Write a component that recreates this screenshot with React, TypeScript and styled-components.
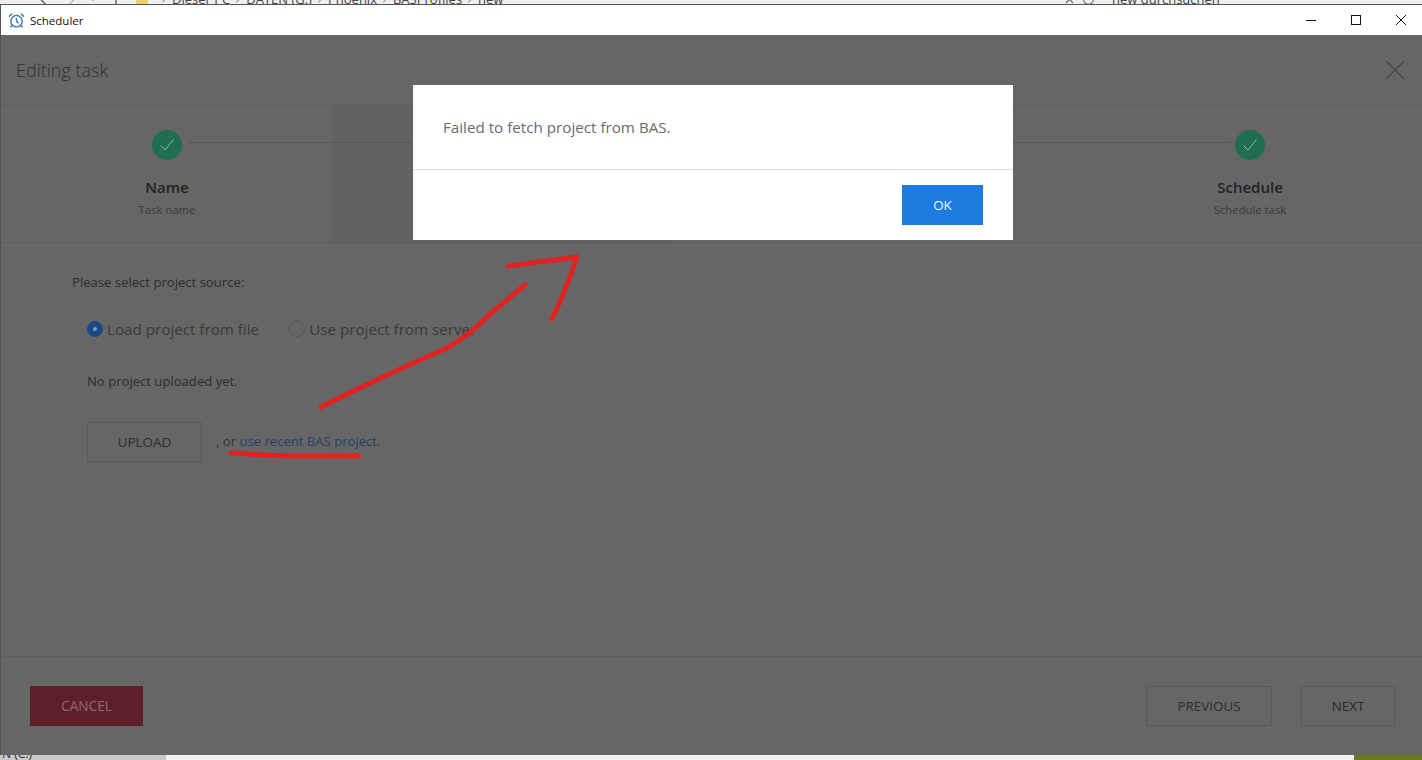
import React from 'react';
import styled, { createGlobalStyle } from 'styled-components';
import { AlarmClock, ArrowLeft, ArrowRight, ArrowUp, ChevronDown, ChevronRight, RotateCw, X } from 'lucide-react';

const GlobalStyle = createGlobalStyle`
    html, body {
        margin: 0;
        padding: 0;
        background: #666666;
    }
    * {
        box-sizing: border-box;
    }
`;

const crumbs = ['Dieser PC', 'DATEN (G:)', 'Phoenix', 'BASProfiles', 'new'];

const steps = [
    { title: 'Name', subtitle: 'Task name', done: true },
    { title: '', subtitle: '', active: true },
    { title: '', subtitle: '' },
    { title: 'Schedule', subtitle: 'Schedule task', done: true },
];

function Check() {
    return (
        <svg width="16" height="14" viewBox="0 0 16 14" fill="none">
            <path d="M1.5 7.5 L6 12 L14.5 1.5" stroke="#8fb8a6" strokeWidth="1" />
        </svg>
    );
}

export default function App() {
    return (
        <>
            <GlobalStyle />
            <Page>
                <ExplorerStrip>
                    <ExplorerNav>
                        <ArrowLeft size={16} color="#555" />
                        <ArrowRight size={16} color="#bbb" />
                        <ChevronDown size={12} color="#777" />
                        <ArrowUp size={16} color="#555" />
                    </ExplorerNav>
                    <FolderIcon />
                    <ExplorerPath>
                        {crumbs.map((crumb) => (
                            <React.Fragment key={crumb}>
                                <ChevronRight size={12} color="#666" />
                                <span>{crumb}</span>
                            </React.Fragment>
                        ))}
                    </ExplorerPath>
                    <ExplorerTools>
                        <X size={13} color="#666" />
                        <RotateCw size={13} color="#666" />
                    </ExplorerTools>
                    <ExplorerSearch>new durchsuchen</ExplorerSearch>
                </ExplorerStrip>
                <Window>
                    <TitleBar>
                        <AlarmClock size={17} color="#3f7cb3" strokeWidth={2} />
                        <TitleText>Scheduler</TitleText>
                        <WindowControls>
                            <svg width="12" height="12" viewBox="0 0 12 12">
                                <path d="M1 6.5 H11" stroke="#111" strokeWidth="1" />
                            </svg>
                            <svg width="12" height="12" viewBox="0 0 12 12">
                                <rect x="1.5" y="1.5" width="9" height="9" fill="none" stroke="#111" strokeWidth="1" />
                            </svg>
                            <svg width="12" height="12" viewBox="0 0 12 12">
                                <path d="M1 1 L11 11 M11 1 L1 11" stroke="#111" strokeWidth="1" />
                            </svg>
                        </WindowControls>
                    </TitleBar>
                    <Content>
                        <Header>
                            <Heading>Editing task</Heading>
                            <svg width="20" height="20" viewBox="0 0 20 20">
                                <path d="M1 1 L19 19 M19 1 L1 19" stroke="#454545" strokeWidth="1.2" />
                            </svg>
                        </Header>
                        <Stepper>
                            {steps.map((step, index) => (
                                <Step key={index} $active={step.active}>
                                    {step.done && (
                                        <>
                                            <StepCircle>
                                                <Check />
                                            </StepCircle>
                                            <StepTitle>{step.title}</StepTitle>
                                            <StepSubtitle>{step.subtitle}</StepSubtitle>
                                        </>
                                    )}
                                </Step>
                            ))}
                        </Stepper>
                        <Body>
                            <SourceLabel>Please select project source:</SourceLabel>
                            <RadioRow>
                                <RadioOption>
                                    <Radio $checked />
                                    Load project from file
                                </RadioOption>
                                <RadioOption>
                                    <Radio />
                                    Use project from server
                                </RadioOption>
                            </RadioRow>
                            <Hint>No project uploaded yet.</Hint>
                            <UploadRow>
                                <OutlineButton $width={115}>UPLOAD</OutlineButton>
                                <UploadNote>
                                    , or <RecentLink>use recent BAS project</RecentLink>.
                                </UploadNote>
                            </UploadRow>
                        </Body>
                        <Footer>
                            <CancelButton>CANCEL</CancelButton>
                            <FooterRight>
                                <OutlineButton $width={126}>PREVIOUS</OutlineButton>
                                <OutlineButton $width={94}>NEXT</OutlineButton>
                            </FooterRight>
                        </Footer>
                    </Content>
                </Window>
                <TaskbarStrip>
                    <DriveLabel>N (C:)</DriveLabel>
                    <TaskbarFill />
                    <OliveCorner />
                </TaskbarStrip>
                <Modal>
                    <ModalMessage>Failed to fetch project from BAS.</ModalMessage>
                    <ModalActions>
                        <OkButton>OK</OkButton>
                    </ModalActions>
                </Modal>
                <Annotation width="1422" height="760" viewBox="0 0 1422 760" fill="none">
                    <path
                        d="M321 407 Q385 375 447 348 Q470 335 490 314 L525 285"
                        stroke="#e02222"
                        strokeWidth="5"
                        strokeLinecap="round"
                    />
                    <path
                        d="M508 266 L577 257 Q566 290 552 319"
                        stroke="#e02222"
                        strokeWidth="5"
                        strokeLinecap="round"
                        strokeLinejoin="round"
                    />
                    <path
                        d="M231 453 Q260 455 295 456 L359 456"
                        stroke="#e02222"
                        strokeWidth="5"
                        strokeLinecap="round"
                    />
                </Annotation>
            </Page>
        </>
    );
}

const Page = styled.div`
    position: relative;
    width: 1422px;
    height: 760px;
    overflow: hidden;
    display: flex;
    flex-direction: column;
    font-family: 'Open Sans', 'Noto Sans', sans-serif;
    background: #666666;
`;

const ExplorerStrip = styled.div`
    height: 5px;
    flex: none;
    overflow: hidden;
    background: #efefef;
    border-bottom: 1px solid #555555;
    color: #444444;
    font-size: 13px;
    line-height: 16px;
    display: flex;
    align-items: flex-start;
    padding-left: 37px;
`;

const ExplorerNav = styled.div`
    width: 99px;
    flex: none;
    display: flex;
    align-items: center;
    gap: 9px;
    margin-top: -9px;
`;

const FolderIcon = styled.div`
    width: 12px;
    height: 5px;
    flex: none;
    background: #efcf6c;
`;

const ExplorerPath = styled.div`
    width: 905px;
    flex: none;
    margin: -9px 0 0 10px;
    display: flex;
    align-items: center;
    gap: 2px;
    white-space: nowrap;
`;

const ExplorerTools = styled.div`
    width: 49px;
    flex: none;
    display: flex;
    gap: 6px;
    margin-top: -7px;
`;

const ExplorerSearch = styled.div`
    margin-top: -9px;
    white-space: nowrap;
`;

const Window = styled.div`
    flex: 1;
    min-height: 0;
    display: flex;
    flex-direction: column;
    border-left: 1px solid #555555;
`;

const TitleBar = styled.div`
    height: 30px;
    flex: none;
    background: #ffffff;
    display: flex;
    align-items: center;
    padding-left: 7px;
    color: #111111;
`;

const TitleText = styled.div`
    margin-left: 5px;
    font-size: 11.5px;
`;

const WindowControls = styled.div`
    margin-left: auto;
    margin-right: 15px;
    display: flex;
    gap: 33px;
`;

const Content = styled.div`
    flex: 1;
    min-height: 0;
    display: flex;
    flex-direction: column;
    background: #666666;
`;

const Header = styled.div`
    height: 71px;
    flex: none;
    display: flex;
    align-items: center;
    justify-content: space-between;
    padding: 0 17px 0 15px;
    border-bottom: 1px solid #5d5d5d;
`;

const Heading = styled.div`
    font-size: 18px;
    font-weight: 300;
    color: #303030;
`;

const Stepper = styled.div`
    position: relative;
    height: 137px;
    flex: none;
    display: grid;
    grid-template-columns: 332px 334px 1fr 344px;
    border-bottom: 1px solid #5d5d5d;

    &::before {
        content: '';
        position: absolute;
        left: 187px;
        right: 192px;
        top: 36px;
        height: 1px;
        background: #565656;
    }
`;

const Step = styled.div<{ $active?: boolean }>`
    display: flex;
    flex-direction: column;
    align-items: center;
    padding-top: 24px;
    background: ${(p) => (p.$active ? '#626262' : 'transparent')};
`;

const StepCircle = styled.div`
    width: 30px;
    height: 30px;
    border-radius: 50%;
    background: #1f6e50;
    display: flex;
    align-items: center;
    justify-content: center;
`;

const StepTitle = styled.div`
    margin-top: 17px;
    font-size: 15px;
    line-height: 20px;
    font-weight: 600;
    color: #222222;
`;

const StepSubtitle = styled.div`
    margin-top: 5px;
    font-size: 11.3px;
    line-height: 16px;
    color: #3a3a3a;
`;

const Body = styled.div`
    flex: 1;
    min-height: 0;
    padding: 30px 0 0 71px;
    color: #2c2c2c;
    font-size: 13.1px;
    border-bottom: 1px solid #5f5f5f;
`;

const SourceLabel = styled.div`
    line-height: 18px;
`;

const RadioRow = styled.div`
    display: flex;
    gap: 30px;
    margin: 27px 0 0 15px;
`;

const RadioOption = styled.div`
    display: flex;
    align-items: center;
    gap: 4px;
    font-size: 15.2px;
    line-height: 22px;
    color: #3a3a3a;
`;

const Radio = styled.span<{ $checked?: boolean }>`
    width: 16px;
    height: 16px;
    border-radius: 50%;
    display: flex;
    align-items: center;
    justify-content: center;
    background: ${(p) => (p.$checked ? '#174a85' : 'transparent')};
    border: 1px solid ${(p) => (p.$checked ? '#174a85' : '#565656')};

    &::after {
        content: '';
        display: ${(p) => (p.$checked ? 'block' : 'none')};
        width: 4px;
        height: 4px;
        border-radius: 50%;
        background: #8a97a8;
    }
`;

const Hint = styled.div`
    margin: 32px 0 0 15px;
    line-height: 18px;
`;

const UploadRow = styled.div`
    display: flex;
    align-items: center;
    gap: 14px;
    margin: 32px 0 0 15px;
    color: #333333;
`;

const UploadNote = styled.span`
    padding-bottom: 2px;
`;

const OutlineButton = styled.div<{ $width: number }>`
    width: ${(p) => p.$width}px;
    height: 40px;
    display: flex;
    align-items: center;
    justify-content: center;
    border: 1px solid #5a5a5a;
    padding-bottom: 1px;
    font-size: 13.4px;
    color: #2c2c2c;
`;

const RecentLink = styled.span`
    color: #26416a;
`;

const Footer = styled.div`
    height: 98px;
    flex: none;
    display: flex;
    align-items: flex-start;
    justify-content: space-between;
    padding: 29px 27px 0 29px;
`;

const CancelButton = styled.div`
    width: 113px;
    height: 40px;
    display: flex;
    align-items: center;
    justify-content: center;
    background: #5f1f2a;
    color: #8e6c72;
    font-size: 13.6px;
    padding-bottom: 1px;
`;

const FooterRight = styled.div`
    display: flex;
    gap: 29px;
`;

const TaskbarStrip = styled.div`
    height: 5px;
    flex: none;
    display: flex;
    overflow: hidden;
    background: #c9c9c9;
`;

const DriveLabel = styled.div`
    width: 166px;
    margin-top: -9px;
    padding-left: 2px;
    font-size: 12px;
    line-height: 16px;
    color: #333333;
`;

const TaskbarFill = styled.div`
    flex: 1;
    background: #f1f1f1;
`;

const OliveCorner = styled.div`
    width: 68px;
    background: #6c7a1e;
`;

const Modal = styled.div`
    position: absolute;
    left: 413px;
    top: 85px;
    width: 600px;
    height: 155px;
    background: #ffffff;
    display: flex;
    flex-direction: column;
`;

const ModalMessage = styled.div`
    height: 85px;
    flex: none;
    padding: 31px 30px 0;
    font-size: 15.2px;
    line-height: 22px;
    color: #6b6b6b;
    border-bottom: 1px solid #dddddd;
`;

const ModalActions = styled.div`
    flex: 1;
    display: flex;
    justify-content: flex-end;
    padding: 15px 30px 0 0;
`;

const OkButton = styled.div`
    width: 81px;
    height: 40px;
    display: flex;
    align-items: center;
    justify-content: center;
    background: #1e7be0;
    color: #f2f8ff;
    font-size: 13.4px;
`;

const Annotation = styled.svg`
    position: absolute;
    left: 0;
    top: 0;
    pointer-events: none;
`;
